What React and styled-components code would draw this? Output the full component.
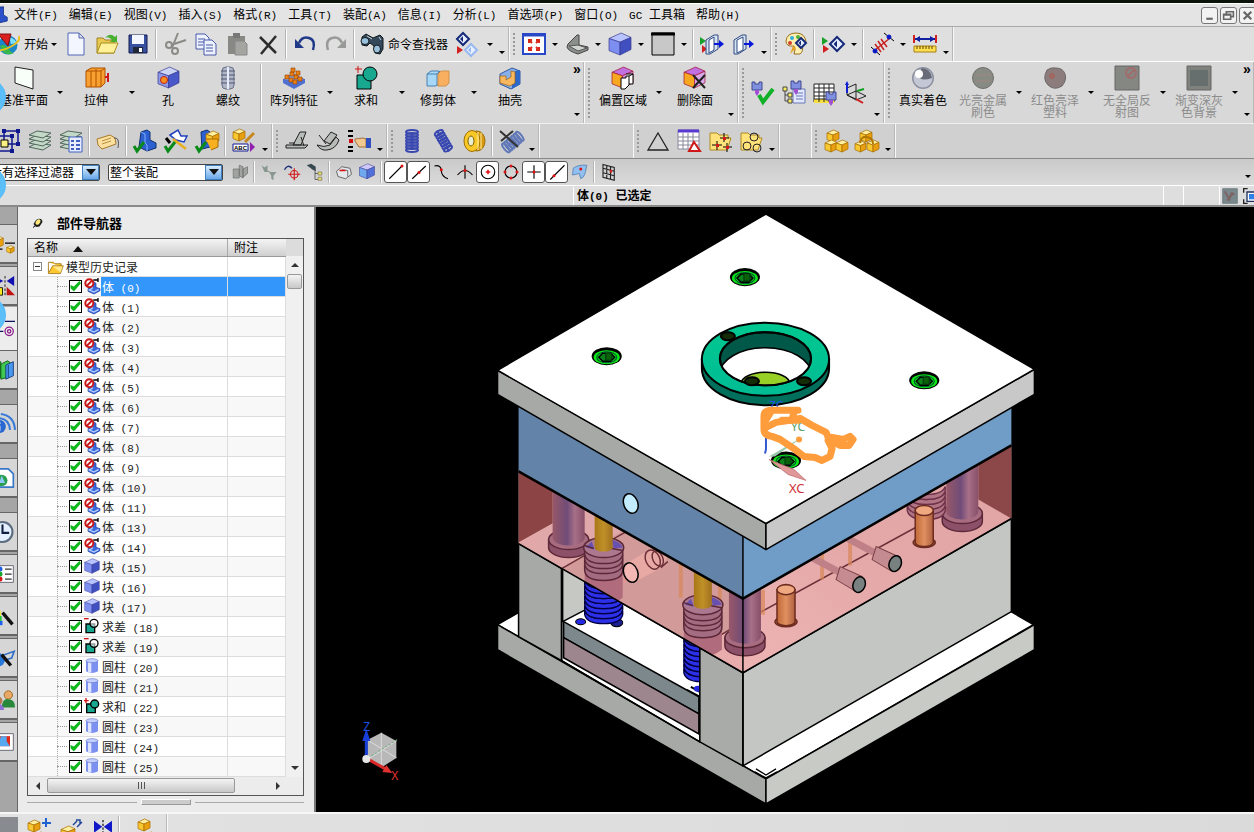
import React from "react";
import styled, { createGlobalStyle, css } from "styled-components";

const Global = createGlobalStyle`
  * { box-sizing: border-box; }
  body { margin: 0; background: #000; }
  button, select, input { font: inherit; color: inherit; margin: 0; }
`;

const App_ = styled.div`
  position: relative;
  display: flex;
  flex-direction: column;
  height: 100vh;
  overflow: hidden;
  font: 12px/16px "Noto Sans CJK SC", "Liberation Sans", sans-serif;
  color: #000;
  background: #dcdcdc;
`;

const Latin = styled.span`
  font-family: "Liberation Mono", monospace;
  font-size: 11px;
  white-space: pre;
`;

/* Sets Latin runs in the half-width face and leaves Chinese in the UI font. */
const T = ({ children }) =>
  children.split(/([\x20-\x7e]+)/).filter(Boolean).map((s, i) =>
    /^[\x20-\x7e]/.test(s) ? <Latin key={i}>{s}</Latin> : <React.Fragment key={i}>{s}</React.Fragment>
  );

/* ---------- icons ---------- */
const Cube = ({ x = 2, y = 2, s = 20, c = ["#b8c4ff", "#7c8ff0", "#4050c0"], line = "#3a3a90" }) => (
  <g stroke={line} strokeWidth="0.7" strokeLinejoin="round">
    <path fill={c[0]} d={`M${x} ${y + s * 0.25}L${x + s * 0.55} ${y}L${x + s} ${y + s * 0.2}L${x + s * 0.5} ${y + s * 0.42}Z`} />
    <path fill={c[1]} d={`M${x} ${y + s * 0.25}L${x + s * 0.5} ${y + s * 0.42}V${y + s}L${x} ${y + s * 0.8}Z`} />
    <path fill={c[2]} d={`M${x + s * 0.5} ${y + s * 0.42}L${x + s} ${y + s * 0.2}V${y + s * 0.75}L${x + s * 0.5} ${y + s}Z`} />
  </g>
);
const gold = ["#fff0a0", "#f8c830", "#e8a010"];
const Gold = (p) => <Cube c={gold} line="#a86c00" {...p} />;
const Check = ({ x = 0, y = 12 }) => (
  <path d={`M${x + 1} ${y + 5}l3 5l7-9`} fill="none" stroke="#0a8a18" strokeWidth="3" />
);
const Diamond = ({ x, y, r = 7, c = "#142a78" }) => (
  <g>
    <path d={`M${x - r} ${y}L${x} ${y - r}L${x + r} ${y}L${x} ${y + r}Z`} fill="#e8f0ff" stroke={c} strokeWidth="2" />
    <path d={`M${x - r / 2} ${y}L${x} ${y - r / 2}V${y + r / 2}Z`} fill={c} />
  </g>
);
const Drill = ({ x, y }) => (
  <g>
    <path d={`M${x} ${y}h3v2h4v-2h3v8h-10z`} fill="#8090e0" stroke="#404890" />
    <path d={`M${x + 3} ${y + 8}h4v3l-2 3l-2-3z`} fill="#a050d0" />
  </g>
);
const Coil = ({ c = "#3848b0", x = 6, w = 12 }) =>
  [3, 6, 9, 12, 15, 18, 21].map((y) => <ellipse key={y} cx={x + w / 2} cy={y} rx={w / 2} ry="2" fill="none" stroke={c} strokeWidth="2" />);
const Stack = () =>
  [18, 14, 10, 6].map((y) => <path key={y} d={`M1 ${y}L9 ${y - 4}L23 ${y - 2}L15 ${y + 3}Z`} fill="#c4d8c8" stroke="#52685c" />);
const Folder = () => (
  <path d="M2 4h7l2 2h9v3h3l-4 12H2z" fill="#ffe27a" stroke="#b08820" />
);

const icons = {
  app: <><path d="M8 2l10-1v11l5 3v5l-13 3L1 18v-4l7-2z" fill="#2c50c8" stroke="#102c80" /><path d="M8 2l4 2v10l-11 0" fill="none" stroke="#a8c4ff" /></>,
  logo: <><circle cx="12" cy="13" r="9.500" fill="#1c86c8" /><path d="M4 14q5-3 8 2t6 5q-6 3-11-1z" fill="#38b848" /><path d="M13 5q5 1 8 6l-6 1z" fill="#7ce0ff" /><path d="M2 2l13 0l-3 12z" fill="#d82020" stroke="#801010" /><path d="M23 4q2 5-7 10T2 18" fill="none" stroke="#e8c020" strokeWidth="2" /></>,
  new: <path d="M4 1h11l5 5v17H4zM15 1v5h5" fill="#f4f6ff" stroke="#5566b8" />,
  open: <><path d="M2 6h6l2 2h9v13H2z" fill="#e8c850" stroke="#a08020" /><path d="M2 21L6 11h17l-4 10z" fill="#fff09a" stroke="#a89020" /><path d="M10 6q5-6 10-1l2-2v7h-7l2-2q-3-4-7-2z" fill="#48b030" /></>,
  save: <><path d="M3 3h18v18H3z" fill="#3850a0" stroke="#101c50" /><path d="M6 3h12v9H6z" fill="#f4f6ff" /><path d="M7 15h10v6H7z" fill="#202838" /><path d="M13 16h3v4h-3z" fill="#fff" /></>,
  cut: <g fill="none" stroke="#8a8a86" strokeWidth="2"><path d="M15 1L9 16M23 8L8 13" /><circle cx="6" cy="13" r="3" /><circle cx="12" cy="19" r="3" /></g>,
  copy: <g stroke="#4858a8" fill="#eef2ff"><path d="M2 2h9l4 4v11H2zM4 7h7M4 10h7M4 13h5" /><path d="M10 8h8l4 4v11H10zM12 13h7M12 16h7M12 19h7" /></g>,
  paste: <><path d="M3 4h17v18H3z" fill="#888884" /><path d="M8 1h7v5H8z" fill="#777" /><path d="M10 9h9l3 3v11H10z" fill="#a4a4a0" stroke="#888" /></>,
  del: <path d="M4 5l16 16M20 4L5 22" stroke="#2c2c2c" strokeWidth="2.500" />,
  undo: <><path d="M6 11q3-7 10-5t4 12" fill="none" stroke="#203888" strokeWidth="2.500" /><path d="M2 7v9h9z" fill="#203888" /></>,
  redo: <><path d="M18 11q-3-7-10-5t-4 12" fill="none" stroke="#989a98" strokeWidth="2.500" /><path d="M22 7v9h-9z" fill="#989a98" /></>,
  find: <g fill="#34485c" stroke="#10181c"><path d="M2 5l4-3l7 4l7-3l3 3v11l-3 5l-5-1l-1-7l-4-3l-3 3l-5-1z" /><ellipse cx="5" cy="9" rx="4" ry="3.500" fill="#98c0dc" /><ellipse cx="17" cy="17" rx="3.500" ry="4" fill="#98c0dc" /><path d="M7 4l5 3M19 5l2 3" stroke="#c8d4dc" /></g>,
  diamonds: <><Diamond x={9} y={7} r={6} /><path d="M3 14l6 4l-6 4z" fill="#d02020" /><Diamond x={17} y={18} r={6} c="#98b8f0" /></>,
  fit: <><path d="M1 2h22v20H1z" fill="#fff" stroke="#2848c8" strokeWidth="2" /><path d="M1 3h22" stroke="#2848c8" strokeWidth="3" /><path d="M7 11V8h3M14 8h3v3M17 15v3h-3M10 18H7v-3M7 8l3 3M17 8l-3 3M17 18l-3-3M7 18l3-3" fill="none" stroke="#d82818" strokeWidth="2" /></>,
  seat: <><path d="M3 12L12 3l2 0v10l9 2v3l-10 4q-10-3-11-7z" fill="#8c908c" stroke="#444" /><path d="M4 14l9-1l9 3l-9 3z" fill="#d0d4d0" stroke="#555" /></>,
  cube: <Cube x={1} y={1} s={22} />,
  square: <><path d="M1 1h22v22H1z" fill="#c8c8c8" stroke="#000" /><path d="M0 2h24" stroke="#000" strokeWidth="3" /></>,
  exit1: <><path d="M0 5l6 4l-6 4z" fill="#18a028" /><path d="M2 13l5 4l-5 4z" fill="#d02020" /><path d="M6 8l8-5h4v14l-8 5H6z" fill="#d4e4f4" stroke="#304880" /><path d="M9 8l5-3v13l-5 3z" fill="#fff" stroke="#304880" /><path d="M14 12h6" stroke="#0818d8" strokeWidth="2" /><path d="M19 8l5 4l-5 4z" fill="#0818d8" /></>,
  exit2: <><path d="M3 8l8-5h4v14l-8 5H3z" fill="#d4e4f4" stroke="#304880" /><path d="M6 8l6-3v13l-6 3z" fill="#fff" stroke="#304880" /><path d="M13 12h6" stroke="#0818d8" strokeWidth="2" /><path d="M18 8l5 4l-5 4z" fill="#0818d8" /></>,
  palette: <><path d="M2 9Q3 1 12 1t10 9l-4 3q2 6-2 9h-6q2-5 0-8Q2 15 2 9z" fill="#fff0b0" stroke="#987020" /><circle cx="8" cy="6" r="2" fill="#30b0e0" /><circle cx="14" cy="5" r="2" fill="#50b040" /><circle cx="6" cy="11" r="2" fill="#d04030" /><Diamond x={17} y={11} r={5} /><path d="M9 14l3 2l-6 6z" fill="#e8a018" /></>,
  play: <><path d="M1 5l6 4l-6 4zM1 5z" fill="#18a028" /><path d="M2 13l6 4l-6 4z" fill="#d02020" /><Diamond x={16} y={12} r={7} /></>,
  measure: <g stroke="#222" fill="none"><path d="M1 15l9 8M14 1l10 8" stroke="#000" /><path d="M4 19L20 6" stroke="#c82020" strokeWidth="1.500" /><path d="M5 12l6 8M8 9l6 9M11 7l6 8" stroke="#c82020" strokeWidth="1.500" /><circle cx="5" cy="19" r="2" fill="#0818c8" stroke="#0818c8" /><circle cx="19" cy="5" r="2" fill="#0818c8" stroke="#0818c8" /></g>,
  ruler: <><path d="M1 3v8M23 3v8" stroke="#d02020" strokeWidth="2" /><path d="M2 7h20" stroke="#1020a0" strokeWidth="2" /><path d="M2 7l5-3v6zM22 7l-5-3v6z" fill="#1020a0" /><path d="M1 14h22v6H1z" fill="#ffe050" stroke="#a88010" /><path d="M4 14v3M7 14v3M10 14v3M13 14v3M16 14v3M19 14v3" stroke="#604000" /></>,
  plane: <path d="M3 1l18 3v19L3 17z" fill="#f8fff8" stroke="#222" />,
  extrude: <><path d="M2 5l5-3l14 0v15l-4 4H2z" fill="#f8a030" stroke="#b05000" /><path d="M2 5h15v16M17 5l4-3M7 5v16M12 3v18" fill="none" stroke="#b05000" /><path d="M24 7v9M21 11h3" stroke="#d01818" strokeWidth="2" /></>,
  hole: <><Cube x={2} y={1} s={21} c={["#ccd4f4", "#8c98e8", "#4858c8"]} /><circle cx="8" cy="14" r="3.500" fill="#f89020" stroke="#c02010" /></>,
  thread: <><rect x="6" y="1" width="12" height="22" rx="4" fill="#b0b4c4" stroke="#687088" /><path d="M5 5h14M5 9h14M5 13h14M5 17h14" stroke="#505878" /><path d="M12 1v22" stroke="#e8ecff" strokeWidth="2" /></>,
  pattern: <><path d="M1 14l10-6l12 6l-11 7z" fill="#88a8f0" stroke="#3850a8" /><path d="M1 14v3l11 6l11-6v-3" fill="#5070d0" />{[[5, 11], [10, 8], [14, 11], [9, 14], [13, 16], [18, 13], [11, 4], [16, 7]].map(([x, y]) => <path key={x + "" + y} d={`M${x - 2} ${y - 2}h4v4h-4z`} fill="#e88018" stroke="#904000" strokeWidth="0.600" />)}</>,
  unite: <><path d="M3 9h14v14H3z" fill="#18a890" stroke="#000" /><circle cx="16" cy="8" r="7" fill="#18a890" stroke="#000" /><path d="M4 0v7M1 3h7" stroke="#d01010" /></>,
  subtract: <><path d="M3 9h13v13H3z" fill="#18a890" stroke="#000" strokeWidth="2" /><circle cx="15" cy="8" r="6" fill="#fff" fillOpacity="0.600" stroke="#000" strokeWidth="2" /><path d="M0 1h7" stroke="#d01010" strokeWidth="2" /></>,
  uniteS: <><path d="M4 9h13v13H4z" fill="#18a890" stroke="#000" strokeWidth="2" /><circle cx="16" cy="9" r="6" fill="#18a890" stroke="#000" strokeWidth="2" /><path d="M3 0v8M0 4h7" stroke="#d01010" strokeWidth="2" /></>,
  trim: <><path d="M1 8l4-3h8v12l-3 3H1z" fill="#a8d8f8" stroke="#4880b0" /><path d="M1 8h10v12M11 8l3-3" fill="none" stroke="#4880b0" /><path d="M12 8l3-3h8v12l-3 3h-8z" fill="#f8b060" stroke="#d09048" /></>,
  shell: <><path d="M2 8l12-6l8 3v13l-9 5L2 18z" fill="#88b0e8" stroke="#3058a0" /><path d="M17 5l5-1v14l-8 5v-5l3-2z" fill="#2c68c8" /><path d="M2 10l6 0v4l5-3v-6l4 1v11l-5 3l-10-3z" fill="#f8b860" stroke="#a06010" strokeWidth="0.700" /></>,
  offset: <><Cube x={1} y={1} s={21} c={["#c070e0", "#f8a820", "#d898e8"]} line="#a01030" /><path d="M10 12h5v-2h3v9l-4 4h-4zM15 8h7v10h-4M18 10l4-2" fill="#fff" stroke="#000" /></>,
  delface: <><Cube x={1} y={1} s={21} c={["#c070e0", "#f8a820", "#d8a8e8"]} line="#a01030" /><path d="M10 9l12 13M22 9L10 22" stroke="#202020" strokeWidth="2" /></>,
  d1: <><path d="M8 14l4 7l10-13" fill="none" stroke="#10b028" strokeWidth="4" /><Drill x={1} y={1} /></>,
  d2: <><path d="M11 8h12v14H11z" fill="#e4e8ff" stroke="#6878b8" /><path d="M14 12h7M14 15h7M14 18h7" stroke="#6878b8" /><path d="M3 8v12h4M3 14h4" fill="none" stroke="#444" /><path d="M1 6h4v4H1zM6 12h4v4H6zM6 18h4v4H6z" fill="#f8f060" stroke="#444" /><Drill x={9} y={0} /></>,
  d3: <><path d="M1 3h20v18H1z" fill="#fff" stroke="#222" /><path d="M1 18h20v4H1z" fill="#f8e040" /><path d="M1 7h20M1 11h20M1 15h20M1 18h20M6 3v18M11 3v18M16 3v18" stroke="#222" /><Drill x={13} y={11} /></>,
  axes: <><path d="M3 7l9-4v15l-9-4zM3 14l9-4l10 5l-10 4z" fill="none" stroke="#222" /><path d="M3 12V3" stroke="#1020d0" strokeWidth="2" /><path d="M1 4l2-4l2 4z" fill="#1020d0" /><path d="M13 10l7-2" stroke="#10a020" strokeWidth="2" /><path d="M12 18l7 4" stroke="#d01818" strokeWidth="2" /></>,
  ball: <><circle cx="12" cy="12" r="11" fill="#8c90a0" /><circle cx="12" cy="12" r="9.500" fill="#c4c8d4" /><path d="M11 2q9 1 10 10q-9 3-12 0q-2-6 2-10z" fill="#686c78" /><circle cx="8" cy="8" r="4" fill="#fff" /></>,
  gball: <><circle cx="12" cy="12" r="10.500" fill="#888a84" stroke="#70706c" /><path d="M4 9h16M4 15h16" stroke="#a08880" /></>,
  rball: <><path d="M4 4q4-3 9-2q7 0 9 6t-3 12q-8 5-14-1T4 4z" fill="#8c7c7c" stroke="#6c6868" /><circle cx="9" cy="10" r="3" fill="#a06860" /></>,
  gsq1: <><path d="M0 0h24v24H0z" fill="#858783" stroke="#666" /><circle cx="16" cy="7" r="5" fill="none" stroke="#a06c6c" strokeWidth="2" /><path d="M12 11l8-8" stroke="#a06c6c" strokeWidth="2" /></>,
  gsq2: <><path d="M0 0h24v24H0z" fill="#80827e" stroke="#666" /><path d="M3 4h18v16H3z" fill="#666e6e" /></>,
  select: <><path d="M8 2h14v13H8z" fill="none" stroke="#101890" strokeWidth="1.500" /><path d="M1 7h15v15H1z" fill="none" stroke="#101890" strokeWidth="1.500" /><path d="M5 11h7v7H5z" fill="#f8f080" stroke="#000" /><path d="M6 0h4v4H6zM20 0h4v4h-4zM20 13h4v4h-4zM14 5h4v4h-4zM14 20h4v4h-4z" fill="#101890" /></>,
  layers: <Stack />,
  layerlist: <><Stack /><path d="M10 8h13v15H10z" fill="#e8ecff" stroke="#4060c0" /><path d="M12 12h3M12 16h3M12 20h3M17 12h4M17 16h4M17 20h4" stroke="#4060c0" strokeWidth="2" /></>,
  tag: <><path d="M1 10l13-4l5 3l1 6l-14 5l-4-4z" fill="#fbe0a0" stroke="#a87828" /><path d="M18 9q6-1 4 10" fill="none" stroke="#555" /><path d="M6 12l9-3M6 15l9-3" stroke="#b89040" /></>,
  part1: <><path d="M8 3l6-2l3 2v8l6 3v5l-9 3l-8-4z" fill="#2c60d0" stroke="#103070" /><path d="M8 3l4 2v9l2 2v6" fill="none" stroke="#80b0ff" /><Check /></>,
  part2: <><path d="M6 6L14 1l3 6h6l-3 6l-8-2z" fill="#fff" stroke="#2040c0" strokeWidth="1.500" /><path d="M9 10l13 10" stroke="#e8b020" strokeWidth="2.500" /><path d="M2 9l4 5" stroke="#000" strokeWidth="3" /><Check /></>,
  part3: <><path d="M6 3l6-2l3 2v15l-8 2z" fill="#2c60d0" stroke="#103070" /><Gold x={11} y={2} s={13} /><path d="M11 10h12v8l-7 3" fill="#f8b020" stroke="#a86c00" /><Check /></>,
  abc: <><Gold x={1} y={0} s={12} /><path d="M22 4l-9 9" stroke="#c88820" strokeWidth="3" /><path d="M1 15h15v7H1z" fill="#fff" stroke="#101890" /><text x="2" y="21" fontFamily="Liberation Sans" fontWeight="700" fontSize="6">ABC</text><path d="M18 13l5 5l-5 5z" fill="#9020b0" /></>,
  bl1: <><path d="M1 16h22l-3 3H1zM8 16L15 3h6l-5 13z" fill="#b8bcb8" stroke="#222" /><path d="M4 14h6M16 8l3 9" stroke="#222" /></>,
  bl2: <><path d="M1 16q4 6 10 5q9-1 12-10l-3-3l-6 8q-6 3-13 0zM8 12L15 3l6 3l-7 9z" fill="#b8bcb8" stroke="#222" /><path d="M3 6l7 9" stroke="#222" /></>,
  hand: <><path d="M1 2h5M1 7h5M1 18h5M1 22h5" stroke="#000" strokeWidth="2" /><path d="M2 10h4v4H2z" fill="#d01010" /><path d="M8 10l8-1l3 1v8l-7 0l-4-6z" fill="#f0c890" stroke="#a07040" /><path d="M19 9h5v10h-5z" fill="#3050c0" /></>,
  coil: <Coil />,
  spring: <g transform="rotate(-30 12 12)"><Coil x={8} w={9} /><path d="M12 0v4M12 20v4" stroke="#3848b0" strokeWidth="2" /></g>,
  wheel: <><ellipse cx="15" cy="12" rx="8" ry="10" fill="#d89810" stroke="#a07000" /><ellipse cx="10" cy="12" rx="8" ry="10.500" fill="#f8c828" stroke="#a07000" /><ellipse cx="9" cy="12" rx="3" ry="5" fill="#e8ecd0" stroke="#806000" /><path d="M16 3v18M19 4v16" stroke="#fff0a0" /></>,
  springcut: <><g transform="rotate(50 12 14)"><Coil x={7} w={11} c="#6078b8" /></g><path d="M1 2l18 16M14 2L2 12" stroke="#333" strokeWidth="2" /></>,
  triangle: <path d="M12 4l10 17H2z" fill="none" stroke="#222" strokeWidth="1.300" />,
  tableIc: <><path d="M1 1h21v19H1z" fill="#fff" stroke="#8888a0" /><path d="M1 2h21" stroke="#5838d0" strokeWidth="3" /><path d="M1 8h21M1 12h21M1 16h21M6 4v16M11 4v16M16 4v16" stroke="#889" /><path d="M17 13l6 9H12z" fill="#fff" stroke="#d01818" strokeWidth="2" /></>,
  fold1: <><Folder /><path d="M16 4v9M12 9h9M9 12v9M4 16h10M19 14v9M15 18h9" stroke="#000" /><path d="M15 8h3v3h-3zM8 15h3v3H8zM18 17h3v3h-3z" fill="#d81818" /></>,
  fold2: <><Folder /><g fill="none" stroke="#222"><circle cx="15" cy="8" r="4" /><circle cx="8" cy="17" r="4" /><circle cx="18" cy="19" r="4" /></g></>,
  asm1: <><Gold x={3} y={1} s={12} /><Gold x={1} y={11} s={12} /><Gold x={12} y={11} s={12} /></>,
  asm2: <><Gold x={5} y={1} s={12} /><Gold x={0} y={12} s={11} /><Gold x={12} y={11} s={12} /><path d="M5 14q1-7 7-6t6 7" fill="none" stroke="#b07800" strokeWidth="2" /></>,
  s1: <path d="M3 8h8v12H3zM11 3l5 2v15l-5-3zM16 8l6-3v9l-6 5z" fill="#a0a4a0" stroke="#707470" />,
  s2: <g fill="#889890"><path d="M2 3l4 3l4-3v7l4 2H6z" /><path d="M12 12h10l-4 5v6l-3-2v-4z" /></g>,
  s3: <><path d="M2 9q4-8 10-2" fill="none" stroke="#203078" strokeWidth="2" /><circle cx="15" cy="15" r="5" fill="none" stroke="#d01818" strokeWidth="1.500" /><path d="M15 7v16M7 15h16" stroke="#d01818" strokeWidth="1.500" /></>,
  s4: <><path d="M1 3l6-2l6 4v6l-4-2z" fill="#384850" /><path d="M12 10v12h5M12 14h5" fill="none" stroke="#444" /><path d="M16 12h5v4h-5zM16 19h5v4h-5z" fill="#f0e060" stroke="#776" /></>,
  s5: <><path d="M2 11l7-6l11 2l2 8l-8 6l-10-3z" fill="#e4e8ec" stroke="#444" /><path d="M9 9l8 1v8" fill="none" stroke="#444" /><path d="M6 10l8 0" stroke="#e01010" strokeWidth="2" /></>,
  s6: <Cube x={2} y={1} s={20} c={["#d0c8f8", "#70a8f0", "#5070d8"]} />,
  line1: <><path d="M3 21L20 4" stroke="#000" strokeWidth="1.500" /><circle cx="20" cy="4" r="2" fill="#e01010" /></>,
  line2: <><path d="M3 21L21 4" stroke="#000" strokeWidth="1.500" /><circle cx="12" cy="12.500" r="2" fill="#e01010" /></>,
  curve: <><path d="M2 4q8-2 9 5q0 9 9 12" fill="none" stroke="#000" strokeWidth="1.500" /><circle cx="11" cy="9" r="2" fill="#e01010" /></>,
  cross: <><path d="M2 16q10-12 20 0M12 3v18" fill="none" stroke="#000" strokeWidth="1.500" /><circle cx="12" cy="10" r="2" fill="#e01010" /></>,
  circ: <><circle cx="12" cy="12" r="9" fill="none" stroke="#000" strokeWidth="1.500" /><path d="M12 9v6M9 12h6" stroke="#e01010" strokeWidth="2" /></>,
  quad: <><circle cx="12" cy="12" r="8" fill="none" stroke="#000" strokeWidth="1.500" />{[[12, 4], [12, 20], [4, 12], [20, 12]].map(([x, y]) => <circle key={x + "," + y} cx={x} cy={y} r="2" fill="#e01010" />)}</>,
  plus: <><path d="M12 3v18M3 12h18" stroke="#000" strokeWidth="1.500" /><circle cx="12" cy="12" r="2" fill="#e01010" /></>,
  line3: <><path d="M3 22L22 3" stroke="#000" strokeWidth="1.500" /><circle cx="8" cy="17" r="2" fill="#e01010" /></>,
  face: <><path d="M3 7Q9 2 21 3l-2 10q-2 7-6 8l-2-7l-9 2z" fill="#90c0f0" stroke="#4878b0" /><circle cx="13" cy="8" r="2" fill="#e01010" /></>,
  grid: <><path d="M4 2l15 4v17L4 19zM9 3v17M14 5v17M4 7l15 4M4 13l15 4" fill="none" stroke="#222" strokeWidth="1.500" /><path d="M13 9h3v4h-3z" fill="#d02020" /></>,
  st1: <><path d="M1 1h22v22H1z" fill="#78888c" stroke="#5c6c70" /><path d="M4 5l7 12l3-9l5 2M8 19l9-12" fill="none" stroke="#7c6464" strokeWidth="3" /></>,
  st2: <><path d="M1 7V1h6M1 17v6h6" fill="none" stroke="#222" strokeWidth="2" /><path d="M6 6h18v14H6z" fill="#fff" stroke="#203060" strokeWidth="2" /><path d="M9 9h15v8H9z" fill="#3080e8" /></>,
  min: <path d="M6 18h12" stroke="#666" strokeWidth="4" />,
  restore: <path d="M8 9V5h13v9h-4M3 10h13v9H3zM3 11h13" fill="none" stroke="#666" strokeWidth="3" />,
  close: <path d="M5 5l14 14M19 5L5 19" stroke="#666" strokeWidth="4" />,
  folderOpen: <><path d="M2 6h7l2 2h9v4" fill="#f8c830" stroke="#906000" /><path d="M2 6v16h17l4-11H8L3 20" fill="#ffc830" stroke="#906000" /><path d="M8 12h14l-3 8" fill="#ffe890" /></>,
  body: <><path d="M10 9l5-3l3 2v6l6 2v3l-9 5l-9-4v-4l4-2z" fill="#3868d8" stroke="#1838a0" /><path d="M12 9v7l-4 2l7 3l7-4" fill="none" stroke="#b8d0ff" strokeWidth="2" /><circle cx="8" cy="8" r="6" fill="#fff" stroke="#c81818" strokeWidth="3" /><path d="M4 12l8-8" stroke="#c81818" strokeWidth="3" /><path d="M14 3h7M21 0v6" stroke="#000" strokeWidth="2" /></>,
  cyl: <><path d="M3 4v16q9 5 18 0V4z" fill="#7c90f0" /><path d="M6 5h5v17h-5z" fill="#dce4ff" /><ellipse cx="12" cy="4" rx="9" ry="3" fill="#c4d0ff" stroke="#6878c8" /></>,
  pin: <><path d="M3 14L8 6q8-5 12 0l1 4l-6 9q-7 2-9-1z" fill="#222" /><ellipse cx="12" cy="10" rx="4" ry="6" transform="rotate(35 12 10)" fill="#ffe878" /><path d="M7 17l-5 4" stroke="#000" strokeWidth="2" /></>,
  r1: <><Gold x={-5} y={2} s={15} /><Gold x={14} y={14} s={9} /><path d="M12 11h12M0 18h9" stroke="#000" strokeWidth="1.500" /></>,
  r2: <><path d="M12 0v24" stroke="#000" strokeDasharray="3 2" /><path d="M14 6l9-6v12zM10 6L1 1v10z" fill="#1010b0" /><path d="M0 14h9v9H0z" fill="#f8e820" stroke="#000" /><path d="M14 13l10 10H14z" fill="#c01010" /></>,
  r3: <><path d="M12 4h12M0 16h10" stroke="#101060" strokeWidth="1.500" /><circle cx="17" cy="16" r="5" fill="none" stroke="#881888" strokeWidth="1.500" /><circle cx="17" cy="16" r="2" fill="none" stroke="#881888" strokeWidth="1.500" /></>,
  r4: <><path d="M0 6l7-4v19H0z" fill="#20b828" stroke="#085010" /><path d="M7 5l8-4l3 2v17l-11 3z" fill="#40c850" stroke="#085010" /><path d="M13 6l9-4v17l-9 4zM16 6v15" fill="#4898f0" stroke="#103070" /></>,
  r5: <><circle cx="5" cy="15" r="8" fill="#2868d0" /><path d="M5 10v2M5 14v6" stroke="#fff" strokeWidth="3" /><path d="M6 5q11 1 12 14M7 0q16 2 17 19" fill="none" stroke="#3878d8" strokeWidth="2.500" /></>,
  r6: <><path d="M0 1h16l6 6v16H0z" fill="#fff" stroke="#3878c8" strokeWidth="2" /><circle cx="8" cy="15" r="7" fill="#28a050" /><path d="M8 9l4 9H5z" fill="#90c8ff" /></>,
  r7: <><circle cx="9" cy="12" r="12" fill="#e4f0ff" stroke="#5c6c80" strokeWidth="2.500" /><path d="M9 3v10h8" fill="none" stroke="#102040" strokeWidth="2.500" /></>,
  r8: <><path d="M0 2h22v20H0z" fill="#fff" stroke="#556" /><circle cx="6" cy="6" r="3" fill="#2060e0" /><circle cx="6" cy="12" r="3" fill="#18a828" /><circle cx="6" cy="18" r="3" fill="#d81818" /><path d="M12 6h8M12 12h8M12 18h8" stroke="#333" strokeWidth="1.500" /></>,
  r9: <><path d="M0 0h5v6H0z" fill="#f02020" /><path d="M0 6h7v6H0z" fill="#f8e820" /><path d="M0 12h8v6H0z" fill="#20c840" /><path d="M0 18h9v5H0z" fill="#2060f0" /><path d="M9 8l12 14" stroke="#111" strokeWidth="4" /></>,
  r10: <><circle cx="4" cy="14" r="8" fill="#2878d8" /><path d="M6 10L23 4l-3 8l-10 3" fill="none" stroke="#3070c8" strokeWidth="2" /><path d="M8 8l11 13" stroke="#111" strokeWidth="4" /></>,
  r11: <><circle cx="16" cy="6" r="5" fill="#e8a868" stroke="#986010" /><path d="M8 21q1-11 8-10q8 0 8 10z" fill="#28883c" /><circle cx="4" cy="13" r="5" fill="#b87850" /><path d="M0 24q0-7 5-7t6 7z" fill="#9070d8" /></>,
  r12: <><path d="M0 2h22v20H0z" fill="#fff" stroke="#556" /><path d="M3 5h15v12H3z" fill="#e02818" /><path d="M7 5h7v6l4 6H4z" fill="#58a8f0" /></>,
  b0: <path d="M0 0h24v24H0z" fill="#888c90" />,
  b1: <><Gold x={1} y={3} s={12} /><path d="M19 1v9M15 6h9" stroke="#2060d0" strokeWidth="2" /><Gold x={9} y={15} s={9} /></>,
  b2: <><Gold x={0} y={9} s={14} /><path d="M12 8l4-4M15 3h4v4M16 10l5-5" fill="none" stroke="#204898" strokeWidth="1.500" /></>,
  b3: <><path d="M0 1l11 8l-11 8zM24 1l-11 8l11 8z" fill="#1018c8" /><path d="M12 0v24" stroke="#000" strokeWidth="1.500" strokeDasharray="3 2" /></>,
  b4: <><Gold x={6} y={2} s={12} /><Gold x={15} y={15} s={8} /></>,
};

const Svg = styled.svg`
  display: block;
  flex: none;
  overflow: visible;
`;
const Icon = ({ name, size = 24 }) => (
  <Svg width={size} height={size} viewBox="0 0 24 24" aria-hidden="true">{icons[name]}</Svg>
);

/* ---------- menu bar ---------- */
const TitleEdge = styled.div`
  flex: none;
  height: 4px;
  background: #0a120a;
  border-bottom: 1px solid #fff;
`;
const MenuBar = styled.nav`
  flex: none;
  display: flex;
  align-items: center;
  gap: 11px;
  height: 22px;
  background: #e4e4e4;
  overflow: hidden;
`;
const MenuItem = styled.button`
  flex: none;
  padding: 0;
  border: 0;
  background: none;
  white-space: pre;
`;
const AppMark = styled.span`
  width: 8px;
  margin-right: -5px;
  display: flex;
  justify-content: flex-end;
`;
const WindowControls = styled.div`
  display: flex;
  gap: 2px;
  margin: 0 -2px 0 auto;
`;
const WindowButton = styled.button`
  display: grid;
  place-items: center;
  width: 17px;
  height: 17px;
  padding: 0;
  border: 1px solid #777;
  border-radius: 3px;
  background: #f2f2f2;
`;

/* ---------- toolbars ---------- */
const toolRow = css`
  flex: none;
  display: flex;
  overflow: hidden;
`;
const ToolRow = styled.div`
  ${toolRow}
  height: ${(p) => p.$h}px;
  background: ${(p) => p.$bg};
  border-top: 1px solid ${(p) => p.$edge || "#fff"};
`;
const Group = styled.div`
  flex: none;
  display: flex;
  align-items: center;
  border-right: 1px solid #f8f8f8;
  border-left: ${(p) => (p.$lead ? "1px solid #f8f8f8" : "0")};
  box-shadow: inset -1px 0 #b8b8b8;
  padding-right: 1px;
`;
const Grip = styled.span`
  flex: none;
  align-self: stretch;
  width: 8px;
  margin: 5px 0;
  background: radial-gradient(circle, #999 1px, transparent 1px) 0 0 / 8px 4px repeat-y;
`;
const Sep = styled.span`
  flex: none;
  align-self: stretch;
  width: 6px;
  margin: 2px 0;
  background: linear-gradient(90deg, transparent 2px, #b4b4b4 2px 3px, #fff 3px 4px, transparent 4px);
`;
const Spacer = styled.span`
  flex: none;
  width: ${(p) => p.$w}px;
`;
const Tool = styled.button`
  flex: none;
  display: flex;
  align-items: center;
  justify-content: ${(p) => (p.$cut ? "flex-end" : "center")};
  width: ${(p) => p.$w || 31}px;
  height: 28px;
  padding: 0;
  border: 0;
  background: none;
  overflow: hidden;
`;
const WordTool = styled(Tool)`
  width: auto;
  gap: 4px;
  padding-left: ${(p) => p.$pl || 0}px;
`;
const Clip = styled.span`
  display: flex;
  justify-content: flex-end;
  width: 20px;
  overflow: hidden;
`;
const Caret = styled.button`
  flex: none;
  align-self: ${(p) => (p.$low ? "flex-end" : "center")};
  display: grid;
  place-items: center;
  width: 12px;
  height: 14px;
  margin-bottom: ${(p) => (p.$low ? 2 : 0)}px;
  padding: 0;
  border: 0;
  background: none;
  &::before {
    content: "";
    border: 3px solid transparent;
    border-top-color: #000;
    border-bottom: 0;
  }
`;
const BigTool = styled.button`
  flex: none;
  display: flex;
  flex-direction: column;
  align-items: center;
  align-self: flex-start;
  gap: 4px;
  width: ${(p) => (p.$cut ? 54 : 60)}px;
  padding: 4px ${(p) => (p.$cut ? 6 : 0)}px 0 0;
  border: 0;
  background: none;
  white-space: nowrap;
  line-height: 12px;
  color: ${(p) => (p.disabled ? "#8c8c8c" : "#000")};
`;
const BigLabel = styled.span`
  display: block;
  text-align: center;
  white-space: pre;
`;
const More = styled.div`
  align-self: stretch;
  display: flex;
  flex-direction: column;
  justify-content: space-between;
  align-items: flex-end;
  flex: none;
  width: ${(p) => p.$w}px;
`;
const Chevron = styled.span`
  width: 12px;
  text-align: center;
  font: 700 14px/14px "Liberation Sans", sans-serif;
`;

const Tools = ({ names }) =>
  names.map((n, i) =>
    n === "|" ? <Sep key={i} /> :
    n === "v" ? <Caret key={i} aria-label="下拉" /> :
    n === "_" ? <Caret key={i} $low aria-label="更多" /> :
    n === ":" ? <Grip key={i} /> :
    <Tool key={i} aria-label={n}><Icon name={n} /></Tool>
  );
const Big = ({ icon, label, caret, disabled, cut }) => (
  <>
    <BigTool disabled={disabled} $cut={cut}><Icon name={icon} /><BigLabel>{label}</BigLabel></BigTool>
    {caret && <Caret aria-label={label.replace("\n", "") + "下拉"} />}
  </>
);

/* ---------- selection bar ---------- */
const SelectWrap = styled.label`
  position: relative;
  flex: none;
  display: block;
  width: ${(p) => p.$w}px;
  margin-left: ${(p) => p.$ml}px;
`;
const Select = styled.select`
  appearance: none;
  display: block;
  width: 100%;
  height: 17px;
  padding: 0 18px 0 1px;
  border: 1px solid #444;
  border-radius: 2px;
  background: #fff;
  line-height: 14px;
`;
const SelectArrow = styled.span`
  position: absolute;
  top: 1px;
  right: 1px;
  display: grid;
  place-items: center;
  width: 17px;
  height: 15px;
  background: linear-gradient(#d8ecff, #68a8e8);
  border: 1px solid #4080c0;
  pointer-events: none;
  &::before {
    content: "";
    border: 5px solid transparent;
    border-top: 6px solid #111;
    border-bottom: 0;
  }
`;
const Snap = styled.button`
  flex: none;
  display: grid;
  place-items: center;
  width: 23px;
  height: 22px;
  padding: 0;
  border: 1px solid ${(p) => (p["aria-pressed"] ? "#555" : "transparent")};
  border-radius: 3px;
  background: ${(p) => (p["aria-pressed"] ? "#fff" : "none")};
`;
const snaps = [
  ["s1"], "|", ["s2"], ["s3"], ["s4"], "|", ["s5"], ["s6"], "|",
  ["line1", true], ["line2", true], ["curve"], ["cross"], ["circ", true], ["quad"], ["plus", true], ["line3", true], ["face"], "|", ["grid"],
];
const SnapGroup = styled.div`
  flex: 1;
  display: flex;
  align-items: center;
`;

const StatusBar = styled.div`
  ${toolRow}
  height: 22px;
  align-items: center;
  background: #dedede;
  border-top: 1px solid #fff;
  border-bottom: 2px solid #8a8a8a;
`;
const Prompt = styled.div`
  flex: 0 0 573px;
  max-width: 46%;
`;
const Message = styled.div`
  flex: 1;
  padding-left: 3px;
  border-left: 1px solid #fff;
  font-weight: 700;
`;
const StatusCell = styled.div`
  flex: none;
  display: flex;
  align-items: center;
  gap: 5px;
  align-self: stretch;
  width: ${(p) => p.$w}px;
  padding-left: 2px;
  border-left: 1px solid #fff;
  overflow: hidden;
`;

/* ---------- workspace ---------- */
const Workspace = styled.main`
  flex: 1;
  display: flex;
  min-height: 0;
`;
const Rail = styled.nav`
  flex: none;
  display: flex;
  flex-direction: column;
  width: 18px;
  background: #a6a6a6;
  border-right: 1px solid #666;
  overflow: hidden;
`;
const RailTab = styled.button`
  flex: none;
  display: flex;
  align-items: center;
  justify-content: flex-end;
  width: 100%;
  height: 40px;
  margin-top: ${(p) => p.$gap}px;
  padding: 0 2px 0 0;
  border: 0;
  border-top: 1px solid #666;
  border-bottom: 2px solid #666;
  background: #d6d6d6;
  ${(p) => p.$on && css`
    height: 43px;
    border-color: transparent;
    background: #ededed;
  `}
`;
const Panel = styled.aside`
  flex: none;
  display: flex;
  flex-direction: column;
  width: 298px;
  padding: 0 10px 0 9px;
  background: #ebebeb;
  border-right: 2px solid #777;
`;
const PanelTitle = styled.h2`
  display: flex;
  align-items: center;
  gap: 13px;
  height: 31px;
  margin: 0;
  padding-left: 5px;
  font-size: 13px;
`;
const TreeFrame = styled.div`
  display: flex;
  flex-direction: column;
  border: 1px solid #555;
  background: #fff;
`;
const TreeBody = styled.div`
  display: flex;
`;
const Tree = styled.table`
  flex: 1;
  min-width: 0;
  table-layout: fixed;
  border-collapse: collapse;
  th {
    height: 17px;
    padding: 0 0 0 6px;
    text-align: left;
    font-weight: 400;
    line-height: 14px;
    background: linear-gradient(#f4f4f4, #cfcfcf);
    border-right: 1px solid #aaa;
    border-bottom: 1px solid #999;
  }
  th:last-child { border-right: 0; }
  td {
    height: 20px;
    padding: 0;
    border-right: 1px solid #ddd;
    border-bottom: 1px solid #ddd;
  }
`;
const SortMark = styled.span`
  display: inline-block;
  margin-left: 15px;
  border: 5px solid transparent;
  border-bottom: 6px solid #111;
  border-top: 0;
`;
const RowLabel = styled.label`
  display: flex;
  align-items: center;
  height: 19px;
  padding-left: ${(p) => (p.$root ? 5 : 29)}px;
  white-space: pre;
  &::before {
    content: "";
    display: ${(p) => (p.$root ? "none" : "block")};
    width: 10px;
    border-bottom: 1px dotted #999;
  }
`;
const Branch = styled.td`
  background-color: ${(p) => (p.$odd ? "#f8f8f8" : "#fff")};
  background-image: ${(p) => (p.$root ? "none" : "repeating-linear-gradient(#aaa 0 1px, transparent 1px 2px)")};
  background-position: 29px 0;
  background-size: 1px 20px;
  background-repeat: no-repeat;
`;
const NoteCell = styled.td`
  background: ${(p) => (p.$on ? "#3296fa" : p.$odd ? "#f8f8f8" : "#fff")};
`;
const Tick = styled.input`
  appearance: none;
  flex: none;
  width: 13px;
  height: 13px;
  border: 1px solid #000;
  background: #fff;
  && { margin: 0 2px; }
  &:checked::before {
    content: "";
    display: block;
    width: 11px;
    height: 11px;
    background: #0cb81c;
    clip-path: polygon(5% 40%, 35% 55%, 85% 5%, 100% 25%, 35% 100%, 5% 70%);
  }
`;
const NodeName = styled.span`
  flex: 1;
  align-self: stretch;
  margin-left: 1px;
  padding-left: 1px;
  line-height: 19px;
  color: ${(p) => (p.$on ? "#fff" : "#222")};
  background: ${(p) => (p.$on ? "#3296fa" : "none")};
`;
const Expander = styled.button`
  flex: none;
  width: 9px;
  height: 9px;
  margin-right: 5px;
  padding: 0;
  border: 1px solid #888;
  background: linear-gradient(#333, #333) 1px 3px / 5px 1px no-repeat #fff;
`;
const VScroll = styled.div`
  flex: none;
  display: flex;
  flex-direction: column;
  align-items: center;
  width: 17px;
  padding: 17px 0 0;
  background: linear-gradient(#dcdcdc 17px, #f0f0f0 17px);
`;
const ScrollArrow = styled.span`
  margin: ${(p) => (p.$dir === "left" || p.$dir === "right" ? "0 7px 0 8px" : "7px 6px")};
  border: 4px solid transparent;
  ${(p) => p.$dir === "up" && "border-bottom-color:#333;border-top:0;"}
  ${(p) => p.$dir === "down" && "border-top-color:#333;border-bottom:0;margin-top:auto;"}
  ${(p) => p.$dir === "left" && "border-right-color:#333;border-left:0;"}
  ${(p) => p.$dir === "right" && "border-left-color:#333;border-right:0;"}
`;
const Thumb = styled.div`
  display: grid;
  place-items: center;
  width: ${(p) => (p.$h ? "188px" : "15px")};
  height: 15px;
  border: 1px solid #999;
  border-radius: 2px;
  background: linear-gradient(#f4f4f4, #c8c8c8);
  &::before {
    content: "";
    width: ${(p) => (p.$h ? 7 : 0)}px;
    height: 7px;
    background: repeating-linear-gradient(90deg, #555 0 1px, transparent 1px 3px);
  }
`;
const HScroll = styled.div`
  display: flex;
  align-items: center;
  height: 18px;
  background: #ececec;
  ${ScrollArrow}:last-child { margin-left: auto; margin-right: 23px; }
`;
const Splitter = styled.div`
  display: flex;
  align-items: center;
  gap: 4px;
  height: 13px;
  &::before, &::after { content: ""; flex: 1; height: 1px; background: #aaa; }
`;
const SplitHandle = styled.span`
  width: 50px;
  height: 6px;
  background: #ccc;
  border: 1px solid;
  border-color: #fff #999 #999 #fff;
`;
const Viewport = styled.section`
  flex: 1;
  min-width: 0;
  background: #000;
  svg { display: block; width: 100%; height: 100%; }
`;
const BottomBar = styled.div`
  ${toolRow}
  height: 20px;
  align-items: flex-start;
  background: linear-gradient(90deg, #e2e2e2, #dadada);
  border-top: 2px solid #f6f6f6;
`;
const BottomTool = styled(Tool)`
  width: ${(p) => p.$w}px;
  height: 30px;
`;
const Bubble = styled.span`
  position: absolute;
  left: -30px;
  top: ${(p) => p.$y}px;
  width: 36px;
  height: 36px;
  border-radius: 50%;
  background: radial-gradient(#50b0f0, #5cc0fa 60%, #48a8ec);
`;

const nodes = [
  ...[0, 1, 2, 3, 4, 5, 6, 7, 8, 9, 10, 11, 13, 14].map((n) => ["body", "体", n]),
  ...[15, 16, 17].map((n) => ["cube", "块", n]),
  ["subtract", "求差", 18], ["subtract", "求差", 19],
  ["cyl", "圆柱", 20], ["cyl", "圆柱", 21], ["uniteS", "求和", 22],
  ["cyl", "圆柱", 23], ["cyl", "圆柱", 24], ["cyl", "圆柱", 25],
];

const rail = [
  ["r1", 17], ["r2", 2], ["r3", 1, true], ["r4", 0], ["r5", 14], ["r6", 14], ["r7", 14],
  ["r8", 2], ["r9", 2], ["r10", 2], ["r11", 2], ["r12", 2],
];

/* ---------- mould assembly drawing ---------- */
const Screw = ({ x, y }) => (
  <g>
    <ellipse cx={x} cy={y} rx="15" ry="9" fill="#000" />
    <ellipse cx={x} cy={y + 1} rx="13" ry="7" fill="#0ce818" />
    <ellipse cx={x} cy={y + 1} rx="10" ry="5.500" fill="#0ce818" stroke="#043" />
    <path d={`M${x - 8} ${y + 1}l4-4h8l4 4l-4 4h-8z`} fill="#0a8018" stroke="#000" strokeWidth="1.500" />
    <path d={`M${x - 1} ${y - 3}v7h6v-7`} fill="#086008" stroke="#031" />
  </g>
);
const Spring = ({ x, y0, y1, fill, stroke, step = 5 }) => {
  const rows = [];
  for (let y = y1; y >= y0; y -= step) rows.push(y);
  return rows.map((y) => (
    <path key={y} d={`M${x - 19} ${y - 6}v4q2 9 19 9t19-9v-4q-3 8-19 8t-19-8z`} fill={fill} stroke={stroke} strokeWidth="1.300" />
  ));
};
/* Spring seen through the transparent plate: plain lower sleeve, ringed collar, open top. */
const VeiledSpring = ({ x, top, bottom }) => (
  <g stroke="#5c2838" strokeWidth="1.500">
    <path d={`M${x - 19} ${top}V${bottom - 8}q19 14 38 0V${top}z`} fill="#b06c7c" stroke="none" />
    <path d={`M${x - 19} ${top}v22q0 11 19 11t19-11v-22z`} fill="#a46c80" />
    {[7, 12, 17].map((d) => <path key={d} d={`M${x - 19} ${top + d}q2 9 19 9t19-9`} fill="none" />)}
    <ellipse cx={x} cy={top} rx="20" ry="10" fill="#ac7890" />
    <path d={`M${x + 8} ${top - 8}q9 3 11 8l-9 1zM${x - 18} ${top}l6-6l3 8z`} fill="#6850b0" stroke="none" />
    <path d={`M${x + 8} ${top + 1}l11 2M${x - 19} ${top - 2}l9 3`} fill="none" />
  </g>
);
const Pillar = ({ x, top, y }) => (
  <g stroke="#5c2838">
    <path d={`M${x - 20} ${y - 6}v8a20 10 0 0 0 40 0v-8z`} fill="#8c5068" strokeWidth="1.500" />
    <ellipse cx={x} cy={y - 6} rx="20" ry="10" fill="#a86c80" strokeWidth="1.500" />
    <path d={`M${x - 16} ${top}v${y - 8 - top}a16 8 0 0 0 32 0v-${y - 8 - top}z`} fill="url(#pillar)" stroke="none" />
  </g>
);
const Pin = ({ x, top, y }) => (
  <g stroke="#6c2c20" strokeWidth="1.500">
    <ellipse cx={x} cy={y} rx="11" ry="5" fill="#b06048" />
    <path d={`M${x - 9} ${top}v${y - top}a9 4 0 0 0 18 0v${top - y}z`} fill="url(#pin)" />
    <ellipse cx={x} cy={top} rx="9" ry="5" fill="#f0a880" />
  </g>
);
const Rod = ({ x, top, y }) => (
  <path d={`M${x - 9} ${top}v${y - top}a9 4 0 0 0 18 0v${top - y}z`} fill="url(#rod)" />
);

const Model = () => (
  <svg viewBox="316 208 938 604" preserveAspectRatio="xMidYMid slice" role="img" aria-label="模具装配体">
    <defs>
      <linearGradient id="pillar"><stop offset="0" stopColor="#985868" /><stop offset="0.450" stopColor="#704c78" /><stop offset="0.700" stopColor="#a87088" /><stop offset="1" stopColor="#885068" /></linearGradient>
      <linearGradient id="pin"><stop offset="0" stopColor="#c06838" /><stop offset="0.500" stopColor="#e09060" /><stop offset="1" stopColor="#b06040" /></linearGradient>
      <linearGradient id="rod"><stop offset="0" stopColor="#a87818" /><stop offset="0.500" stopColor="#c09028" /><stop offset="1" stopColor="#a07020" /></linearGradient>
      <linearGradient id="pinkR" x1="0" y1="1" x2="1" y2="0"><stop offset="0" stopColor="#eeb4b4" /><stop offset="0.500" stopColor="#e4a8a8" /><stop offset="1" stopColor="#e0a4a4" /></linearGradient>
      <linearGradient id="ring" x2="0" y2="1"><stop offset="0" stopColor="#00c890" /><stop offset="1" stopColor="#00bc94" /></linearGradient>
      <clipPath id="gap"><path d="M562 569L700 648V742L562 661Z" /></clipPath>
      <clipPath id="bore"><ellipse cx="765.500" cy="359.500" rx="45.500" ry="26.500" /></clipPath>
      <clipPath id="core"><path d="M519 472L743 599L1011 446V519L743 673L519 544Z" /></clipPath>
    </defs>

    <g stroke="#000" strokeWidth="1.500" strokeLinejoin="round">
      <path d="M498 625L766 470L1033 625L766 779Z" fill="#fff" />
      <path d="M498 625L766 779V804L498 650Z" fill="#a6a9a5" />
      <path d="M766 779L1034 625V650L766 804Z" fill="#c8cac6" />
      <path d="M519 544L562 569V661L519 637Z" fill="#a6a9a5" />
      <path d="M562 569L700 648V742L562 661Z" fill="#fff" />
      <path d="M563 569L586 582V610L563 622Z" fill="#c6c8c4" />
    </g>
    <g clipPath="url(#gap)">
      <ellipse cx="581" cy="622" rx="5" ry="3" fill="#2428e0" stroke="#000" />
      <ellipse cx="617" cy="623" rx="6" ry="4" fill="#1c2090" stroke="#000" />
      <Spring x={604} y0={582} y1={617} fill="#2c30e8" stroke="#000040" />
      <Spring x={703} y0={640} y1={675} fill="#2c30e8" stroke="#000040" />
      <path d="M687 690l13 7M691 687l9 5" stroke="#000" strokeWidth="2" />
      <ellipse cx="698" cy="689" rx="4" ry="3" fill="#2428e0" />
      <g stroke="#000" strokeWidth="1.500">
        <path d="M564 622L699 697V714L564 638Z" fill="#7d888c" />
        <path d="M564 638L699 714V734L564 658Z" fill="#9e868e" />
      </g>
    </g>
    <path d="M562 569V661L700 742" fill="none" stroke="#000" strokeWidth="1.500" />
    <g stroke="#000" strokeWidth="1.500" strokeLinejoin="round">
      <path d="M700 648L743 673V766L700 742Z" fill="#a8aba7" />
      <path d="M743 673L1011 519V612L743 766Z" fill="#c3c6c2" />
    </g>

    <path d="M519 472L743 599V673L519 544Z" fill="#d39a9a" />
    <path d="M743 599L1011 446V519L743 673Z" fill="url(#pinkR)" />
    <g clipPath="url(#core)">
      <path d="M519 472L553 490V524L519 543Z" fill="#8c4444" />
      <path d="M978 460L1011 446V519L978 500Z" fill="#8c4848" />
      <path d="M519 543L585 506L625 530L562 569Z" fill="#e0a8a8" />
      <path d="M700 648L743 622V673Z" fill="#e8acac" />
      <path d="M562 569L630 530M700 648L743 622L930 520" fill="none" stroke="#6c3038" strokeWidth="1.500" />
      <path d="M681 560v38M720 570v30M763 590v25M822 550v30M850 540v26" stroke="#d88858" strokeWidth="4" opacity="0.700" />
      <Pillar x={569} top={470} y={546} />
      <Pillar x={962} top={440} y={520} />
      <path d="M624 568L655 548L668 556L624 584Z" fill="#e09894" />
      <path d="M630 562L652 549L668 556L662 568L634 583Z" fill="#e8a8a4" />
      <g fill="none" stroke="#6c3038" strokeWidth="1.500">
        <ellipse cx="653" cy="560" rx="7" ry="10" transform="rotate(-25 653 560)" />
        <ellipse cx="658" cy="559" rx="5" ry="8" transform="rotate(-25 658 559)" />
        <path d="M653 549l10 4M661 568l7-6" />
      </g>
      <VeiledSpring x={604} top={548} bottom={606} />
      <Rod x={604} top={500} y={548} />
      <VeiledSpring x={703} top={605} bottom={658} />
      <Rod x={703} top={560} y={605} />
      <Spring x={926} y0={490} y1={513} fill="#b07484" stroke="#6c3048" />
      <Pillar x={745} top={580} y={644} />
      <path d="M812 558L840 573M848 539L876 554" stroke="#c08088" strokeWidth="7" />
      <path d="M840 567L862 577L856 592L836 580Z" fill="#c48c90" stroke="#7c4048" />
      <path d="M876 547L898 557L892 572L872 560Z" fill="#c48c90" stroke="#7c4048" />
    </g>
    <ellipse cx="631" cy="573" rx="7" ry="10" fill="#f4b8b4" stroke="#000" strokeWidth="1.500" transform="rotate(-20 631 573)" />
    <ellipse cx="859" cy="585" rx="6" ry="8" fill="#788080" stroke="#000" strokeWidth="1.500" transform="rotate(20 859 585)" />
    <ellipse cx="895" cy="564" rx="6" ry="8" fill="#788080" stroke="#000" strokeWidth="1.500" transform="rotate(20 895 564)" />
    <Pin x={786} top={590} y={622} />
    <Pin x={924} top={511} y={543} />
    <path d="M519 544L743 673L1011 519M743 599V766" fill="none" stroke="#000" strokeWidth="1.500" />

    <g stroke="#000" strokeWidth="1.500" strokeLinejoin="round">
      <path d="M519 405L743 534V599L519 472Z" fill="#6384a8" stroke="none" />
      <path d="M743 534L1011 400V446L743 599Z" fill="#709cc8" stroke="none" />
      <path d="M519 472L743 599L1011 446" fill="none" strokeWidth="2.500" />
      <path d="M743 534V599" />
      <ellipse cx="631" cy="504" rx="7" ry="10" fill="#c4ecff" transform="rotate(-20 631 504)" />
      <path d="M498 371L766 524V550L498 395Z" fill="#a7a9a6" />
      <path d="M766 524L1034 370V395L766 550Z" fill="#c8c8c8" />
      <path d="M766 215L1034 370L766 524L498 371Z" fill="#fff" />
    </g>

    <Screw x={745} y={278} />
    <Screw x={607} y={357} />
    <Screw x={924} y={381} />
    <Screw x={786} y={461} />

    <g stroke="#000" strokeWidth="2">
      <path d="M702 360v9a63.500 37 0 0 0 127 0v-9z" fill="#00705c" />
      <ellipse cx="765.500" cy="360" rx="63.500" ry="36.500" fill="url(#ring)" />
      <ellipse cx="765.500" cy="359.500" rx="45.500" ry="26.500" fill="#005848" />
    </g>
    <g clipPath="url(#bore)">
      <ellipse cx="765.500" cy="375" rx="45.500" ry="26.500" fill="#fff" stroke="#000" strokeWidth="1.500" />
      <ellipse cx="765.500" cy="384" rx="24" ry="11" fill="#98d028" stroke="#000" strokeWidth="1.500" />
    </g>
    <ellipse cx="765.500" cy="359.500" rx="45.500" ry="26.500" fill="none" stroke="#000" strokeWidth="2" />
    {[[728, 337], [752, 382], [804, 382]].map(([x, y]) => <ellipse key={x} cx={x} cy={y} rx="7" ry="4" fill="#142c08" stroke="#000" strokeWidth="2" />)}

    <g fontFamily="Noto Sans, sans-serif" fontSize="12">
      <text x="769" y="411" fill="#2850e8">ZC</text>
      <text x="791" y="432" fill="#58a068">YC</text>
      <text x="789" y="494" fontSize="13" fill="#d03038">XC</text>
    </g>
    <path d="M766 416V450l-1 4" fill="none" stroke="#3458d0" strokeWidth="2" />
    <path d="M769 457l36-21l-30 21z" fill="#98c8a8" />
    <path d="M769 460l25 10l12 11l-18-6z" fill="#e09898" stroke="#b86868" strokeWidth="0.700" />
    <g fill="none" stroke="#ff9c3c" strokeWidth="7" strokeLinecap="round" strokeLinejoin="round">
      <path d="M798 411H772Q764 411 764 417V430Q764 436 772 437L780 440L795 450L804 457L815 458L822 461L830 457L832 449L828 441" />
      <path d="M766 428L776 423L790 421L800 419L812 426L826 433L829 440L840 446L849 446L853 440L850 437L843 440L832 438" />
      <path d="M794 413L792 420M782 421L798 421M770 414L765 422" />
    </g>
    <circle cx="799" cy="440" r="3" fill="#ff9c3c" />
    <path d="M756 769l10 6l10-6M755 772l11 6l11-6" fill="none" stroke="#000" strokeWidth="1.300" />

    <path d="M368 740L382 733L397 741V758L383 767L368 760Z" fill="#b8b8b8" />
    <path d="M382 733V767M368 760L397 741M368 740L397 758" stroke="#dadada" />
    <path d="M369 758L399 739" stroke="#70b078" strokeDasharray="2 2" />
    <path d="M367 757V740" stroke="#1840d8" strokeWidth="3" />
    <path d="M363 741l4-12l4 12z" fill="#1840d8" />
    <path d="M370 760L386 769" stroke="#d82828" strokeWidth="3" />
    <path d="M387 765l6 8l-10-1z" fill="#e03030" />
    <circle cx="367" cy="759" r="4" fill="#e8e8e8" />
    <g fontFamily="Noto Sans, sans-serif" fontSize="12">
      <text x="364" y="731" fill="#2050f0">Z</text>
      <text x="392" y="780" fill="#e03030">X</text>
    </g>
  </svg>
);

const menus = ["文件(F)", "编辑(E)", "视图(V)", "插入(S)", "格式(R)", "工具(T)", "装配(A)", "信息(I)", "分析(L)", "首选项(P)", "窗口(O)", "GC 工具箱", "帮助(H)"];

export default function App() {
  return (
    <App_>
      <Global />
      <TitleEdge />
      <MenuBar>
        <AppMark><Icon name="app" size={18} /></AppMark>
        {menus.map((m) => <MenuItem key={m}><T>{m}</T></MenuItem>)}
        <WindowControls>
          {["min", "restore", "close"].map((n) => <WindowButton key={n} aria-label={n}><Icon name={n} size={13} /></WindowButton>)}
        </WindowControls>
      </MenuBar>

      <ToolRow $h={35} $bg="#dfdfdf" $edge="#aaa">
        <Group>
          <WordTool><Clip><Icon name="logo" /></Clip>开始</WordTool>
          <Tools names={["v", "new", "open", "save", "|", "cut", "copy", "paste", "del", "|", "undo", "redo", "|"]} />
          <WordTool $pl={3}><Icon name="find" />命令查找器</WordTool>
          <Tool $w={36} aria-label="diamonds"><Icon name="diamonds" /></Tool>
          <Tools names={["v", "_"]} />
        </Group>
        <Group><Tools names={[":", "fit", "v", "seat", "v", "cube", "v", "square", "v", "|", "exit1", "exit2", "_"]} /></Group>
        <Group><Tools names={[":", "palette", "|", "play", "v", "|", "measure", "v", "ruler", "_"]} /></Group>
      </ToolRow>

      <ToolRow $h={62} $bg="#d8d8d8">
        <Group>
          <Big icon="plane" label="基准平面" caret cut />
          <Big icon="extrude" label="拉伸" caret />
          <Big icon="hole" label="孔" />
          <Big icon="thread" label="螺纹" />
          <Sep />
          <Big icon="pattern" label="阵列特征" caret />
          <Big icon="unite" label="求和" caret />
          <Big icon="trim" label="修剪体" caret />
          <Big icon="shell" label="抽壳" />
          <More $w={43}><Chevron>»</Chevron><Caret $low aria-label="更多" /></More>
        </Group>
        <Group>
          <Grip />
          <Big icon="offset" label="偏置区域" caret />
          <Big icon="delface" label="删除面" />
          <More $w={12}><span /><Caret $low aria-label="更多" /></More>
        </Group>
        <Group>
          <Tools names={[":", "d1", "d2", "d3", "axes"]} />
          <More $w={12}><span /><Caret $low aria-label="更多" /></More>
        </Group>
        <Group>
          <Grip />
          <Big icon="ball" label="真实着色" />
          <Big icon="gball" label={"光亮金属\n刷色"} caret disabled />
          <Big icon="rball" label={"红色亮泽\n塑料"} caret disabled />
          <Big icon="gsq1" label={"无全局反\n射图"} caret disabled />
          <Big icon="gsq2" label={"渐变深灰\n色背景"} caret disabled />
          <More $w={12}><Chevron>»</Chevron><Caret $low aria-label="更多" /></More>
        </Group>
      </ToolRow>

      <ToolRow $h={35} $bg="#d0d0d0" $edge="#f0f0f0">
        <Group>
          <Tool $w={24} $cut aria-label="select"><Clip><Icon name="select" /></Clip><Spacer $w={4} /></Tool>
          <Tools names={["layers", "layerlist", "|", "tag", "|", "part1", "part2", "part3", "|", "abc", "_"]} />
        </Group>
        <Group><Tools names={[":", "bl1", "bl2", "hand", "_"]} /></Group>
        <Group><Tools names={[":", "coil", "spring", "wheel", "|", "springcut", "_"]} /></Group>
        <Spacer $w={93} />
        <Group $lead><Tools names={[":", "triangle", "tableIc", "fold1", "fold2", "_"]} /></Group>
        <Spacer $w={31} />
        <Group $lead><Tools names={[":", "asm1", "asm2", "_"]} /></Group>
      </ToolRow>

      <ToolRow $h={27} $bg="linear-gradient(#cacaca, #dadada)" $edge="#888">
        <SnapGroup>
          <SelectWrap $w={112} $ml={-12}>
            <Select aria-label="类型过滤器" defaultValue="a"><option value="a">没有选择过滤器</option></Select>
            <SelectArrow />
          </SelectWrap>
          <SelectWrap $w={115} $ml={8}>
            <Select aria-label="选择范围" defaultValue="a"><option value="a">整个装配</option></Select>
            <SelectArrow />
          </SelectWrap>
          <Spacer $w={5} />
          {snaps.map((s, i) => s === "|" ? <Sep key={i} /> : (
            <Snap key={i} aria-label={s[0]} aria-pressed={s[1]}><Icon name={s[0]} size={18} /></Snap>
          ))}
        </SnapGroup>
        <Caret $low aria-label="更多" />
      </ToolRow>

      <StatusBar>
        <Prompt />
        <Message><T>体(0) 已选定</T></Message>
        <StatusCell $w={20} />
        <StatusCell $w={36} />
        <StatusCell $w={35}><Icon name="st1" size={16} /><Icon name="st2" size={16} /></StatusCell>
      </StatusBar>

      <Workspace>
        <Rail>
          {rail.map(([n, gap, on]) => <RailTab key={n} aria-label={n} $gap={gap} $on={on}><Icon name={n} size={20} /></RailTab>)}
        </Rail>
        <Panel>
          <PanelTitle><Icon name="pin" size={12} />部件导航器</PanelTitle>
          <TreeFrame>
            <TreeBody>
              <Tree>
                <colgroup><col /><col width="58" /></colgroup>
                <thead><tr><th>名称<SortMark /></th><th>附注</th></tr></thead>
                <tbody>
                  <tr>
                    <Branch $root>
                      <RowLabel as="div" $root>
                        <Expander aria-label="折叠" /><Icon name="folderOpen" size={17} /><NodeName>模型历史记录</NodeName>
                      </RowLabel>
                    </Branch>
                    <NoteCell />
                  </tr>
                  {nodes.map(([icon, name, n], i) => (
                    <tr key={n}>
                      <Branch $odd={i % 2 === 0}>
                        <RowLabel>
                          <Tick type="checkbox" defaultChecked />
                          <Icon name={icon} size={16} />
                          <NodeName $on={n === 0}><T>{`${name} (${n})`}</T></NodeName>
                        </RowLabel>
                      </Branch>
                      <NoteCell $on={n === 0} $odd={i % 2 === 0} />
                    </tr>
                  ))}
                </tbody>
              </Tree>
              <VScroll>
                <ScrollArrow $dir="up" />
                <Thumb />
                <ScrollArrow $dir="down" />
              </VScroll>
            </TreeBody>
            <HScroll>
              <ScrollArrow $dir="left" />
              <Thumb $h />
              <ScrollArrow $dir="right" />
            </HScroll>
          </TreeFrame>
          <Splitter><SplitHandle /></Splitter>
        </Panel>
        <Viewport><Model /></Viewport>
      </Workspace>

      <BottomBar>
        <Group>
          <BottomTool $w={22} $cut aria-label="b0"><Clip><Icon name="b0" /></Clip><Spacer $w={4} /></BottomTool>
          <BottomTool $w={34} aria-label="b1"><Icon name="b1" /></BottomTool>
          <BottomTool $w={34} aria-label="b2"><Icon name="b2" /></BottomTool>
          <BottomTool $w={26} aria-label="b3"><Icon name="b3" size={18} /></BottomTool>
          <Sep />
          <BottomTool $w={44} aria-label="b4"><Icon name="b4" /></BottomTool>
        </Group>
      </BottomBar>
      <Bubble $y={79} />
      <Bubble $y={167} />
      <Bubble $y={297} />
    </App_>
  );
}
